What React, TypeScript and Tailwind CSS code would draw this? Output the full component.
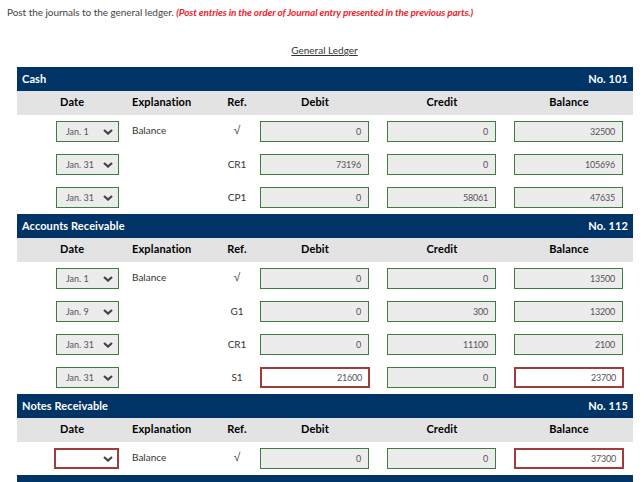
const F = "[font-family:Lato,sans-serif]";
const COLS = "grid grid-cols-[115px_82px_46px_127px_127px_119px]";

type Row = { date: string; dateBad?: boolean; expl?: string; ref: string; debit: string; debitBad?: boolean; credit: string; balance: string; balanceBad?: boolean };

function Chevron() {
  return (
    <svg width="10" height="6" viewBox="0 0 10 6" className="shrink-0">
      <path d="M1 1 L5 4.6 L9 1" fill="none" stroke="#444" strokeWidth="2.2" />
    </svg>
  );
}

function DateSelect({ value, bad }: { value: string; bad?: boolean }) {
  return (
    <div
      className={
        bad
          ? "ml-[37px] flex h-[21px] w-[65px] items-center justify-end border-2 border-[#a23c3c] bg-white pr-[4px]"
          : "ml-[39px] flex h-[21px] w-[63px] items-center justify-between border border-[#3f7d3f] bg-[#ececec] pl-[9px] pr-[5px] text-[9px] text-[#555]"
      }
    >
      {value ? <span>{value}</span> : null}
      <Chevron />
    </div>
  );
}

function Amount({ value, bad, wide }: { value: string; bad?: boolean; wide?: boolean }) {
  return (
    <div
      className={
        (wide ? "w-[110px] " : "w-[109px] ") +
        (bad
          ? "flex h-[21px] items-center justify-end border-2 border-[#a23c3c] bg-white pr-[6px] text-[9px] tracking-[-0.2px] text-[#555]"
          : "flex h-[21px] items-center justify-end border border-[#3f7d3f] bg-[#ececec] pr-[7px] text-[9px] tracking-[-0.2px] text-[#555]")
      }
    >
      {value}
    </div>
  );
}

function Ledger({ name, no, rows }: { name: string; no: string; rows: Row[] }) {
  return (
    <section>
      <div className="flex h-6 items-center justify-between bg-[#003366] px-[5px] text-[11px] font-bold tracking-[0.1px] text-white">
        <span>{name}</span>
        <span>{no}</span>
      </div>
      <div className={COLS + " h-6 items-center bg-[#e3e3e3] pb-[1px] text-[11px] font-bold tracking-[0.15px] text-black"}>
        <div className="pl-[43px]">Date</div>
        <div>Explanation</div>
        <div className="text-center">Ref.</div>
        <div className="w-[110px] text-center">Debit</div>
        <div className="w-[110px] text-center">Credit</div>
        <div className="w-[110px] text-center">Balance</div>
      </div>
      {rows.map((r, i) => (
        <div key={i} className={COLS + " h-[33px] items-start pt-[6px] text-[10px] leading-[21px] text-[#333]"}>
          <DateSelect value={r.date} bad={r.dateBad} />
          <div className="-mt-[1px]">{r.expl}</div>
          <div className={r.ref === "√" ? "-mt-[1px] text-center [font-family:'Liberation_Sans',sans-serif] text-[12px] text-[#444]" : "text-center"}>{r.ref}</div>
          <Amount value={r.debit} bad={r.debitBad} wide={r.debitBad} />
          <Amount value={r.credit} />
          <Amount value={r.balance} bad={r.balanceBad} wide={r.balanceBad} />
        </div>
      ))}
    </section>
  );
}

export default function App() {
  return (
    <div className={F + " h-[482px] w-[644px] overflow-hidden bg-white"}>
      <p className="pl-[7px] pt-[5px] text-[10px] leading-[14px] tracking-[-0.05px] text-[#444]">
        Post the journals to the general ledger.{" "}
        <span className="font-bold italic tracking-[-0.14px] text-[#f01c2c]">
          (Post entries in the order of Journal entry presented in the previous parts.)
        </span>
      </p>
      <p className="ml-[5px] mt-[24px] text-center text-[10px] leading-[14px] text-[#333] underline">General Ledger</p>
      <div className="ml-[17px] mt-[10px] w-[616px]">
        <Ledger
          name="Cash"
          no="No. 101"
          rows={[
            { date: "Jan. 1", expl: "Balance", ref: "√", debit: "0", credit: "0", balance: "32500" },
            { date: "Jan. 31", ref: "CR1", debit: "73196", credit: "0", balance: "105696" },
            { date: "Jan. 31", ref: "CP1", debit: "0", credit: "58061", balance: "47635" },
          ]}
        />
        <Ledger
          name="Accounts Receivable"
          no="No. 112"
          rows={[
            { date: "Jan. 1", expl: "Balance", ref: "√", debit: "0", credit: "0", balance: "13500" },
            { date: "Jan. 9", ref: "G1", debit: "0", credit: "300", balance: "13200" },
            { date: "Jan. 31", ref: "CR1", debit: "0", credit: "11100", balance: "2100" },
            { date: "Jan. 31", ref: "S1", debit: "21600", debitBad: true, credit: "0", balance: "23700", balanceBad: true },
          ]}
        />
        <Ledger
          name="Notes Receivable"
          no="No. 115"
          rows={[{ date: "", dateBad: true, expl: "Balance", ref: "√", debit: "0", credit: "0", balance: "37300", balanceBad: true }]}
        />
        <div className="h-6 bg-[#003366]" />
      </div>
    </div>
  );
}
